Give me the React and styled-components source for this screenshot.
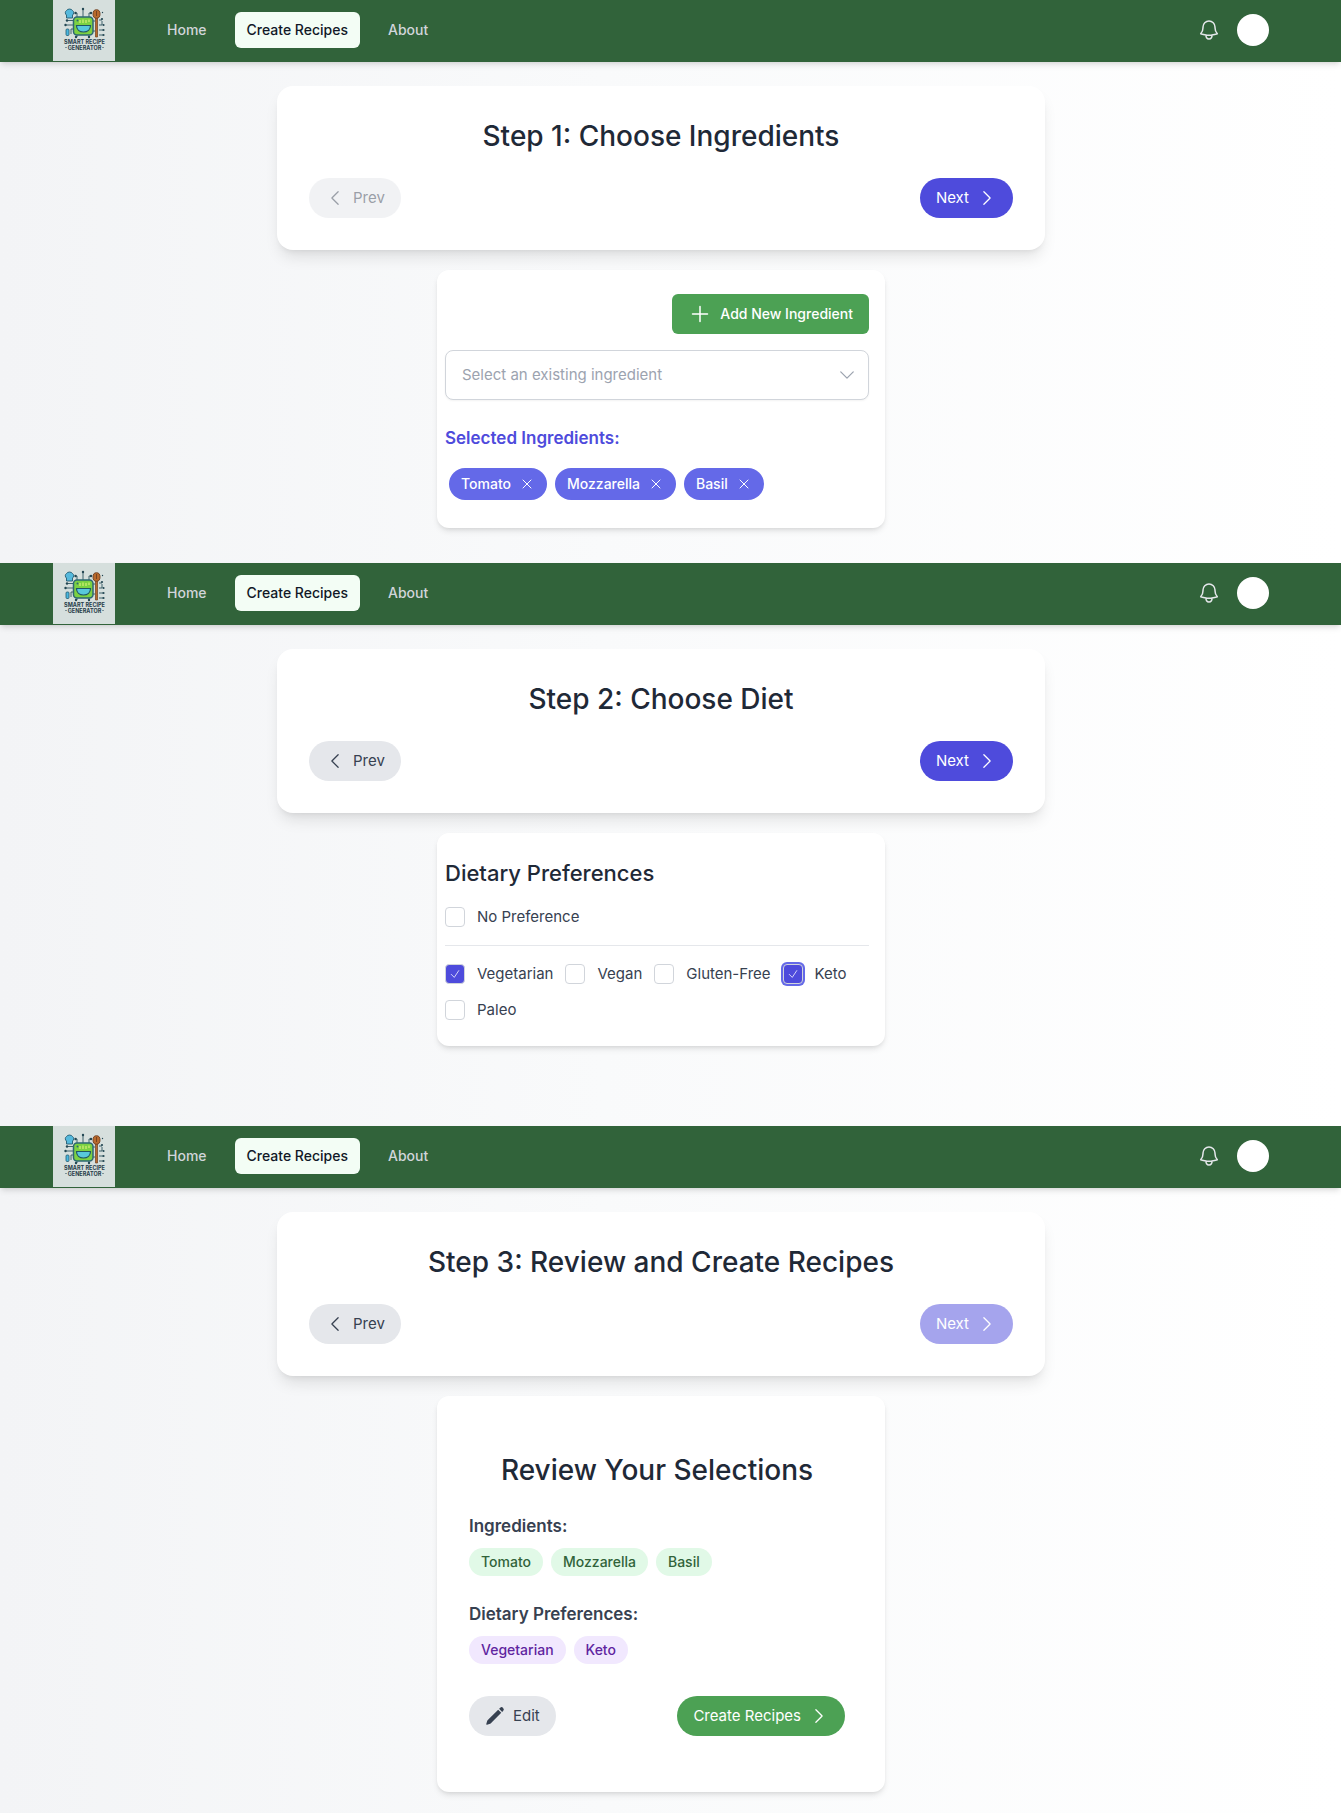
import React from 'react';
import styled, { createGlobalStyle, css } from 'styled-components';
import {
  HiOutlineBell,
  HiOutlineChevronLeft,
  HiOutlineChevronRight,
  HiOutlineChevronDown,
  HiOutlinePlus,
  HiOutlineXMark,
  HiOutlineCheck,
  HiPencil,
} from 'react-icons/hi2';

const color = {
  nav: '#31633a',
  navText: '#d1d5db',
  mint: '#f3fdf5',
  ink: '#1f2937',
  body: '#374151',
  muted: '#9ca3af',
  line: '#d1d5db',
  rule: '#e5e7eb',
  grey: '#e5e7eb',
  indigo: '#4e4bdc',
  indigoSoft: '#6469e8',
  green: '#4ca154',
};

const GlobalStyle = createGlobalStyle`
  *, *::before, *::after { box-sizing: border-box; }
  body {
    margin: 0;
    font-family: Inter, "Liberation Sans", sans-serif;
    font-size: 15px;
    line-height: 24px;
    color: ${color.body};
    -webkit-font-smoothing: antialiased;
  }
  h2, h3, p, ul, fieldset { margin: 0; padding: 0; border: 0; }
  button, select, input { font: inherit; color: inherit; margin: 0; }
  svg { display: block; flex: none; }
`;

const Screen = styled.section`
  min-height: ${(p) => (p.$tall ? 687 : 563)}px;
  background: linear-gradient(to right, #f3f4f6, #f9fafb 45%, #ffffff);
`;

const Header = styled.header`
  background: ${color.nav};
  padding: 0 19px 2px 0;
  box-shadow: 0 4px 6px -1px rgba(0, 0, 0, 0.1), 0 2px 4px -2px rgba(0, 0, 0, 0.1);
`;

const HeaderInner = styled.div`
  max-width: 1280px;
  height: 60px;
  margin: 0 auto;
  padding: 0 32px;
  display: flex;
  align-items: center;
  gap: 40px;
`;

const LogoLink = styled.a`
  align-self: flex-start;
  flex: none;
`;

const NavLinks = styled.nav`
  display: flex;
  gap: 16px;
  flex: 1;
`;

const NavLink = styled.a`
  padding: 8px 12px;
  border-radius: 6px;
  font-size: 14px;
  line-height: 20px;
  font-weight: 500;
  text-decoration: none;
  color: ${(p) => (p.$active ? '#111827' : color.navText)};
  background: ${(p) => (p.$active ? color.mint : 'transparent')};
`;

const HeaderTools = styled.div`
  display: flex;
  align-items: center;
  gap: 16px;
`;

const IconButton = styled.button`
  padding: 0;
  border: 0;
  background: none;
  color: ${(p) => p.$color || 'inherit'};
  cursor: pointer;
`;

const Avatar = styled.button`
  width: 32px;
  height: 32px;
  padding: 0;
  border: 0;
  border-radius: 50%;
  background: #ffffff;
`;

const Content = styled.div`
  padding: 24px 19px 20px 0;
  display: flex;
  flex-direction: column;
  align-items: center;
  gap: 20px;
`;

const StepCard = styled.div`
  width: 100%;
  max-width: 768px;
  padding: 32px;
  border-radius: 16px;
  background: #ffffff;
  box-shadow: 0 10px 15px -3px rgba(0, 0, 0, 0.1), 0 4px 6px -4px rgba(0, 0, 0, 0.1);
`;

const Title = styled.h2`
  margin-bottom: 24px;
  font-size: 28px;
  line-height: 36px;
  font-weight: 500;
  text-align: center;
  color: ${color.ink};
`;

const Spread = styled.div`
  display: flex;
  justify-content: space-between;
`;

const tones = {
  grey: css`background: ${color.grey}; color: ${color.body};`,
  indigo: css`background: ${color.indigo}; color: #ffffff;`,
  green: css`background: ${color.green}; color: #ffffff;`,
};

const Button = styled.button`
  display: inline-flex;
  align-items: center;
  gap: 8px;
  height: 40px;
  padding: 0 16px;
  border: 0;
  border-radius: 20px;
  cursor: pointer;
  ${(p) => tones[p.$tone]}
  ${(p) => p.$boxy && css`
    border-radius: 6px;
    font-size: 14px;
    font-weight: 500;
  `}
  &:disabled { opacity: 0.5; cursor: default; }
`;

const Panel = styled.div`
  width: 100%;
  max-width: 448px;
  padding: 24px 16px 24px 8px;
  border-radius: 12px;
  background: #ffffff;
  box-shadow: 0 4px 6px -1px rgba(0, 0, 0, 0.1), 0 2px 4px -2px rgba(0, 0, 0, 0.1);
`;

const PanelActions = styled.div`
  display: flex;
  justify-content: flex-end;
  margin-bottom: 16px;
`;

const SelectBox = styled.div`
  display: grid;
  align-items: center;
  margin-bottom: 24px;
  color: ${color.muted};
  > * { grid-area: 1 / 1; }
  > svg { justify-self: end; margin-right: 12px; pointer-events: none; }
`;

const Select = styled.select`
  appearance: none;
  width: 100%;
  height: 50px;
  padding: 0 40px 0 16px;
  border: 1px solid ${color.line};
  border-radius: 8px;
  background: #ffffff;
  box-shadow: 0 1px 2px rgba(0, 0, 0, 0.05);
`;

const Subtitle = styled.h3`
  margin-bottom: ${(p) => (p.$accent ? 12 : 8)}px;
  font-size: 17px;
  line-height: 28px;
  font-weight: 600;
  color: ${(p) => (p.$accent ? color.indigo : color.body)};
`;

const Chips = styled.ul`
  display: flex;
  flex-wrap: wrap;
  gap: 8px;
  list-style: none;
  padding: ${(p) => (p.$inset ? 4 : 0)}px;
`;

const chipTones = {
  indigo: css`padding: 6px 12px; background: ${color.indigoSoft}; color: #ffffff;`,
  green: css`padding: 4px 12px; background: #e1f9e7; color: #31633a;`,
  purple: css`padding: 4px 12px; background: #f1e8fe; color: #5f25a0;`,
};

const Chip = styled.li`
  display: flex;
  align-items: center;
  gap: 8px;
  border-radius: 16px;
  font-size: 14px;
  line-height: 20px;
  font-weight: 500;
  ${(p) => chipTones[p.$tone]}
`;

const PanelTitle = styled.legend`
  margin-bottom: 16px;
  padding: 0;
  font-size: 22px;
  line-height: 32px;
  font-weight: 500;
  color: ${color.ink};
`;

const Options = styled.div`
  display: flex;
  flex-wrap: wrap;
  gap: 12px;
`;

const Rule = styled.hr`
  margin: 16px 0;
  border: 0;
  border-top: 1px solid ${color.rule};
`;

const Option = styled.label`
  display: flex;
  align-items: center;
  gap: 12px;
`;

const Tick = styled.span`
  display: grid;
  place-items: center;
  color: #ffffff;
  > * { grid-area: 1 / 1; }
  > svg { pointer-events: none; }
`;

const Checkbox = styled.input`
  appearance: none;
  width: 20px;
  height: 20px;
  border: 1px solid ${color.line};
  border-radius: 4px;
  background: #ffffff;
  &:checked { background: ${color.indigo}; }
  ${(p) => p.$ring && css`box-shadow: 0 0 0 2px ${color.indigoSoft};`}
`;

const Review = styled.div`
  padding: 32px 24px 32px 24px;
`;

const ReviewGroup = styled.div`
  margin-bottom: ${(p) => (p.$last ? 32 : 24)}px;
`;

function Logo() {
  return (
    <svg width="62" height="61" viewBox="0 0 62 61" role="img" aria-label="Smart Recipe Generator">
      <rect width="62" height="61" fill="#d6dfdd" />
      <g fill="none" stroke="#2f5560" strokeWidth="0.9">
        <path d="M24 17v-4h-1.500M30 17V9.500M36 17v-4h2M24 34v3M36 34v2.500" />
        <path d="M21 20.500h-6M21 25h-8M21 29h-3v5M40 21h2M40 31h2M46 20h3M46 25h3v-4M46 30h4M46 35h4" />
      </g>
      <g fill="#234652">
        <circle cx="22.500" cy="13" r="1.200" /><circle cx="30" cy="9" r="1.200" /><circle cx="38" cy="13" r="1.200" />
        <circle cx="14" cy="20.500" r="1.200" /><circle cx="12.500" cy="25" r="1.200" />
        <circle cx="23" cy="37" r="1.200" /><circle cx="36" cy="37" r="1.200" />
        <circle cx="49" cy="19" r="1.100" /><circle cx="50.500" cy="25" r="1.100" />
        <circle cx="50.500" cy="30" r="1.100" /><circle cx="50.500" cy="35" r="1.100" /><circle cx="49.500" cy="12.500" r="0.700" />
      </g>
      <path d="M13.500 18v-3a2.700 2.700 0 0 1 0-4.500 3.500 3 0 0 1 6 0 2.700 2.700 0 0 1 0 4.500v3z" fill="#55b9dc" stroke="#245a70" strokeWidth="0.9" />
      <rect x="13" y="29" width="3" height="6.500" rx="1" fill="#4ab7df" stroke="#245a70" strokeWidth="0.8" />
      <rect x="20.500" y="17" width="19.500" height="18" rx="3.500" fill="#7bd142" stroke="#2d6873" strokeWidth="1.500" />
      <path d="M27 20v3M30 19.500v3.500M33 20v3M36 19.500v2.500" stroke="#d6ef75" strokeWidth="1.200" />
      <circle cx="24.500" cy="20.500" r="1" fill="#2d6873" />
      <path d="M23.500 25.500h14c0 4-3 6.500-7 6.500s-7-2.500-7-6.500z" fill="#58c8dc" stroke="#1f5666" strokeWidth="1.200" />
      <path d="M42.500 17.500h2V37h-2z" fill="#b9692c" stroke="#6f3f20" strokeWidth="0.700" />
      <ellipse cx="43.500" cy="14" rx="3.500" ry="4.300" fill="#b9692c" stroke="#6f3f20" strokeWidth="0.900" />
      <path d="M43.500 11v5" stroke="#7a4420" strokeWidth="1" />
      <g fill="#263c49" fontFamily="Inter, sans-serif" fontWeight="700" fontSize="5.500" textAnchor="middle">
        <text x="31.500" y="44">SMART RECIPE</text>
        <text x="31.500" y="49.500">GENERATOR</text>
      </g>
      <path d="M12 47.500h2M49 47.500h2" stroke="#58717a" strokeWidth="0.700" />
    </svg>
  );
}

function TopBar() {
  return (
    <Header>
      <HeaderInner>
        <LogoLink href="#home"><Logo /></LogoLink>
        <NavLinks aria-label="Main">
          <NavLink href="#home">Home</NavLink>
          <NavLink href="#create" $active aria-current="page">Create Recipes</NavLink>
          <NavLink href="#about">About</NavLink>
        </NavLinks>
        <HeaderTools>
          <IconButton $color={color.grey} aria-label="Notifications"><HiOutlineBell size={24} /></IconButton>
          <Avatar aria-label="Account" />
        </HeaderTools>
      </HeaderInner>
    </Header>
  );
}

function Step({ title, first, last, children }) {
  return (
    <Screen $tall={last}>
      <TopBar />
      <Content>
        <StepCard>
          <Title>{title}</Title>
          <Spread>
            <Button $tone="grey" disabled={first}><HiOutlineChevronLeft size={20} />Prev</Button>
            <Button $tone="indigo" disabled={last}>Next<HiOutlineChevronRight size={20} /></Button>
          </Spread>
        </StepCard>
        <Panel>{children}</Panel>
      </Content>
    </Screen>
  );
}

function DietOption({ name, checked, ring }) {
  return (
    <Option>
      <Tick>
        <Checkbox type="checkbox" defaultChecked={checked} $ring={ring} />
        {checked && <HiOutlineCheck size={12} />}
      </Tick>
      {name}
    </Option>
  );
}

const ingredients = ['Tomato', 'Mozzarella', 'Basil'];
const diets = [
  { name: 'Vegetarian', checked: true },
  { name: 'Vegan' },
  { name: 'Gluten-Free' },
  { name: 'Keto', checked: true, ring: true },
  { name: 'Paleo' },
];

export default function App() {
  return (
    <>
      <GlobalStyle />
      <Step title="Step 1: Choose Ingredients" first>
        <PanelActions>
          <Button $tone="green" $boxy><HiOutlinePlus size={24} />Add New Ingredient</Button>
        </PanelActions>
        <SelectBox>
          <Select aria-label="Select an existing ingredient" defaultValue="">
            <option value="">Select an existing ingredient</option>
          </Select>
          <HiOutlineChevronDown size={20} />
        </SelectBox>
        <Subtitle $accent>Selected Ingredients:</Subtitle>
        <Chips $inset>
          {ingredients.map((name) => (
            <Chip key={name} $tone="indigo">
              {name}
              <IconButton aria-label={`Remove ${name}`}><HiOutlineXMark size={16} /></IconButton>
            </Chip>
          ))}
        </Chips>
      </Step>

      <Step title="Step 2: Choose Diet">
        <fieldset>
          <PanelTitle>Dietary Preferences</PanelTitle>
          <DietOption name="No Preference" />
          <Rule />
          <Options>
            {diets.map((diet) => <DietOption key={diet.name} {...diet} />)}
          </Options>
        </fieldset>
      </Step>

      <Step title="Step 3: Review and Create Recipes" last>
        <Review>
          <Title>Review Your Selections</Title>
          <ReviewGroup>
            <Subtitle>Ingredients:</Subtitle>
            <Chips>
              {ingredients.map((name) => <Chip key={name} $tone="green">{name}</Chip>)}
            </Chips>
          </ReviewGroup>
          <ReviewGroup $last>
            <Subtitle>Dietary Preferences:</Subtitle>
            <Chips>
              {diets.filter((d) => d.checked).map((d) => <Chip key={d.name} $tone="purple">{d.name}</Chip>)}
            </Chips>
          </ReviewGroup>
          <Spread>
            <Button $tone="grey"><HiPencil size={20} />Edit</Button>
            <Button $tone="green">Create Recipes<HiOutlineChevronRight size={20} /></Button>
          </Spread>
        </Review>
      </Step>
    </>
  );
}
